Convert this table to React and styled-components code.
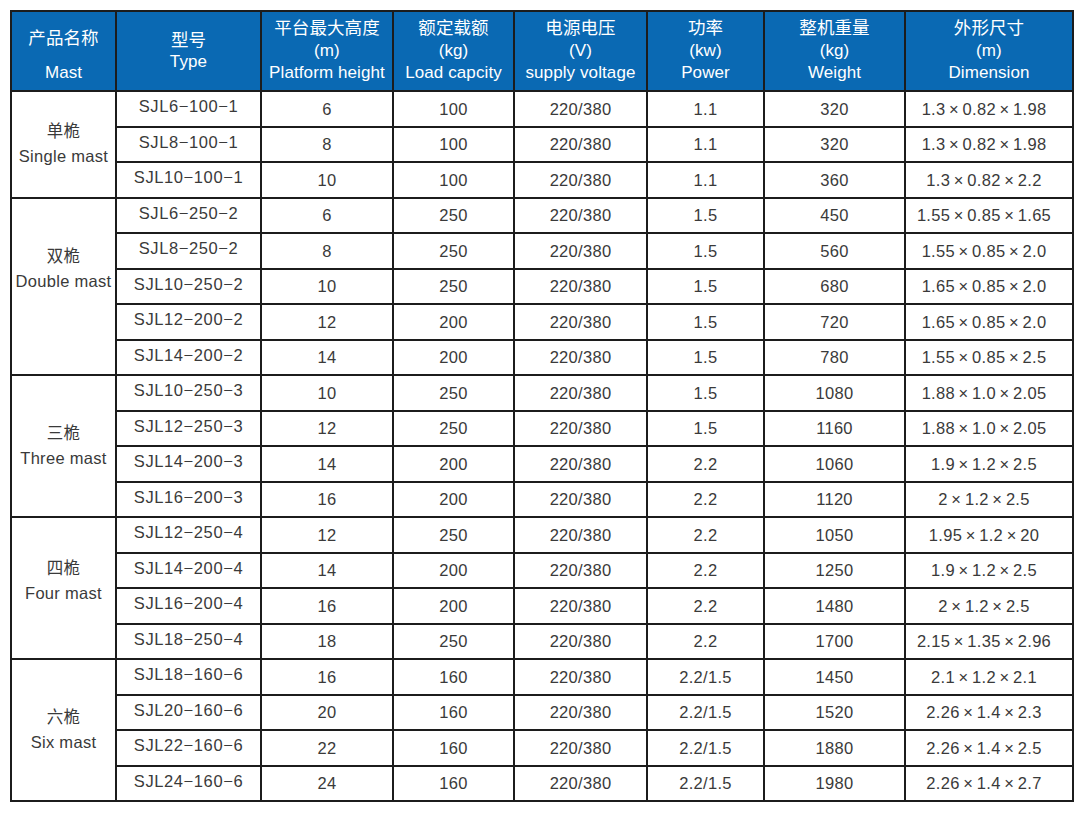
import React from "react";
import styled, { createGlobalStyle } from "styled-components";

const Global = createGlobalStyle`
  html, body { margin: 0; padding: 0; background: #fff; }
  body { padding: 10px; font-family: "Liberation Sans", Arial, "Noto Sans CJK SC", sans-serif; }
`;

const Table = styled.table`
  border-collapse: collapse;
  table-layout: fixed;
  width: 1062px;
  border: 2px solid #1c1c1c;
  color: #3a3a3a;
  font-size: 16.5px;
  letter-spacing: 0.3px;
`;

const HeadRow = styled.tr`
  height: 80px;
`;

const Th = styled.th`
  background: #0a69b3;
  color: #fff;
  font-weight: normal;
  font-size: 17px;
  letter-spacing: 0.1px;
  line-height: 22.5px;
  border: 2px solid #1c1c1c;
  padding: ${(p) => (p.$shift ? "9px 0 0" : "0")};
  vertical-align: middle;
  text-align: center;
  white-space: nowrap;
`;

const Line = styled.div`
  margin-top: ${(p) => p.$gap || 0}px;
  font-size: ${(p) => (p.$cjk ? "17.5px" : "inherit")};
`;

const Row = styled.tr`
  height: 35.5px;
`;

const Td = styled.td`
  border: 2px solid #1c1c1c;
  text-align: center;
  vertical-align: middle;
  padding: 0;
  white-space: nowrap;
  line-height: 20px;
`;

const TypeCell = styled(Td)`
  padding-bottom: 5px;
  letter-spacing: 0.6px;
`;

const DimCell = styled(Td)`
  padding-right: 10px;
`;

const GroupCell = styled.td`
  border: 2px solid #1c1c1c;
  text-align: center;
  vertical-align: middle;
  line-height: 25px;
  padding: 0 0 ${(p) => p.$lift * 2}px;
  white-space: nowrap;
`;

const cols = [105, 145, 132, 121, 133, 117, 141, 168];

const heads = [
  { lines: ["产品名称", "Mast"], shift: true },
  { lines: ["型号", "Type"] },
  { lines: ["平台最大高度", "(m)", "Platform height"] },
  { lines: ["额定载额", "(kg)", "Load capcity"] },
  { lines: ["电源电压", "(V)", "supply voltage"] },
  { lines: ["功率", "(kw)", "Power"] },
  { lines: ["整机重量", "(kg)", "Weight"] },
  { lines: ["外形尺寸", "(m)", "Dimension"] },
];

const x = "\u2009×\u2009";
const d = (a, b, c) => `${a}${x}${b}${x}${c}`;
const t = (a, b, c) => `SJL${a}−${b}−${c}`;

const groups = [
  {
    cn: "单桅",
    en: "Single mast",
    lift: 0,
    rows: [
      [t(6, 100, 1), "6", "100", "1.1", "320", d("1.3", "0.82", "1.98")],
      [t(8, 100, 1), "8", "100", "1.1", "320", d("1.3", "0.82", "1.98")],
      [t(10, 100, 1), "10", "100", "1.1", "360", d("1.3", "0.82", "2.2")],
    ],
  },
  {
    cn: "双桅",
    en: "Double mast",
    lift: 17,
    rows: [
      [t(6, 250, 2), "6", "250", "1.5", "450", d("1.55", "0.85", "1.65")],
      [t(8, 250, 2), "8", "250", "1.5", "560", d("1.55", "0.85", "2.0")],
      [t(10, 250, 2), "10", "250", "1.5", "680", d("1.65", "0.85", "2.0")],
      [t(12, 200, 2), "12", "200", "1.5", "720", d("1.65", "0.85", "2.0")],
      [t(14, 200, 2), "14", "200", "1.5", "780", d("1.55", "0.85", "2.5")],
    ],
  },
  {
    cn: "三桅",
    en: "Three mast",
    lift: 0,
    rows: [
      [t(10, 250, 3), "10", "250", "1.5", "1080", d("1.88", "1.0", "2.05")],
      [t(12, 250, 3), "12", "250", "1.5", "1160", d("1.88", "1.0", "2.05")],
      [t(14, 200, 3), "14", "200", "2.2", "1060", d("1.9", "1.2", "2.5")],
      [t(16, 200, 3), "16", "200", "2.2", "1120", d("2", "1.2", "2.5")],
    ],
  },
  {
    cn: "四桅",
    en: "Four mast",
    lift: 7,
    rows: [
      [t(12, 250, 4), "12", "250", "2.2", "1050", d("1.95", "1.2", "20")],
      [t(14, 200, 4), "14", "200", "2.2", "1250", d("1.9", "1.2", "2.5")],
      [t(16, 200, 4), "16", "200", "2.2", "1480", d("2", "1.2", "2.5")],
      [t(18, 250, 4), "18", "250", "2.2", "1700", d("2.15", "1.35", "2.96")],
    ],
  },
  {
    cn: "六桅",
    en: "Six mast",
    lift: 0,
    rows: [
      [t(18, 160, 6), "16", "160", "2.2/1.5", "1450", d("2.1", "1.2", "2.1")],
      [t(20, 160, 6), "20", "160", "2.2/1.5", "1520", d("2.26", "1.4", "2.3")],
      [t(22, 160, 6), "22", "160", "2.2/1.5", "1880", d("2.26", "1.4", "2.5")],
      [t(24, 160, 6), "24", "160", "2.2/1.5", "1980", d("2.26", "1.4", "2.7")],
    ],
  },
];

export default function App() {
  return (
    <>
      <Global />
      <Table>
        <colgroup>
          {cols.map((w, i) => (
            <col key={i} style={{ width: w }} />
          ))}
        </colgroup>
        <thead>
          <HeadRow>
            {heads.map((h, i) => (
              <Th key={i} $shift={h.shift}>
                {h.lines.map((l, j) => (
                  <Line key={j} $cjk={j === 0} $gap={h.shift && j === 1 ? 12.5 : 0}>
                    {l}
                  </Line>
                ))}
              </Th>
            ))}
          </HeadRow>
        </thead>
        <tbody>
          {groups.map((g) =>
            g.rows.map((r, i) => (
              <Row key={g.en + i}>
                {i === 0 && (
                  <GroupCell rowSpan={g.rows.length} $lift={g.lift}>
                    <div>{g.cn}</div>
                    <div>{g.en}</div>
                  </GroupCell>
                )}
                <TypeCell>{r[0]}</TypeCell>
                <Td>{r[1]}</Td>
                <Td>{r[2]}</Td>
                <Td>220/380</Td>
                <Td>{r[3]}</Td>
                <Td>{r[4]}</Td>
                <DimCell>{r[5]}</DimCell>
              </Row>
            ))
          )}
        </tbody>
      </Table>
    </>
  );
}
